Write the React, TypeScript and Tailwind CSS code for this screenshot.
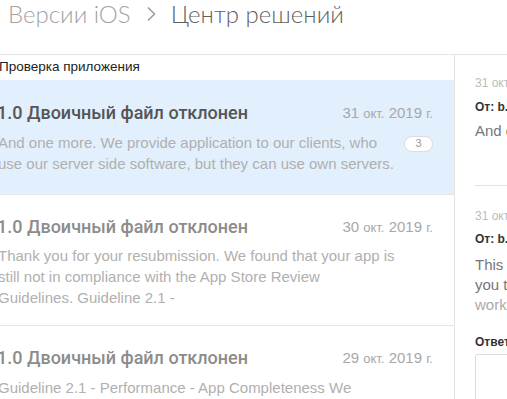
const threads = [
  {
    id: 1,
    title: '1.0 Двоичный файл отклонен',
    day: '31',
    month: 'окт.',
    year: '2019',
    body: 'And one more. We provide application to our clients, who use our server side software, but they can use own servers.',
    count: 3,
    active: true,
  },
  {
    id: 2,
    title: '1.0 Двоичный файл отклонен',
    day: '30',
    month: 'окт.',
    year: '2019',
    body: 'Thank you for your resubmission. We found that your app is still not in compliance with the App Store Review Guidelines. Guideline 2.1 -',
    active: false,
  },
  {
    id: 3,
    title: '1.0 Двоичный файл отклонен',
    day: '29',
    month: 'окт.',
    year: '2019',
    body: 'Guideline 2.1 - Performance - App Completeness We discovered one or more bugs in your app when reviewed on iPad.',
    active: false,
  },
];

function DateLabel({ day, month, year }: { day: string; month: string; year: string }) {
  return (
    <span className="whitespace-nowrap text-[15px] font-light text-[#a8a8a8]">
      {day} <span className="text-[13px]">{month}</span> {year} <span className="text-[13px]">г.</span>
    </span>
  );
}

export default function App() {
  return (
    <div className="h-[399px] w-[507px] overflow-hidden bg-white font-['Liberation_Sans',Arial,sans-serif]">
      <div className="-ml-[20px] w-[527px]">
        {/* breadcrumb */}
        <div className="flex h-[55px] items-start gap-[14px] border-b border-[#e4e4e4] pl-[28px] font-['Lato',sans-serif] text-[24px] font-light leading-[28px]">
          <span className="text-[#a3a3a3]">Версии iOS</span>
          <svg width="10" height="16" viewBox="0 0 10 16" className="mx-[1px] mt-[6px]" fill="none">
            <polyline points="2,1.5 8.5,8 2,14.5" stroke="#9c9c9c" strokeWidth="1.5" />
          </svg>
          <span className="text-[#5f5f5f]">Центр решений</span>
        </div>

        <div className="flex">
          {/* thread list */}
          <div className="w-[475px] shrink-0 border-r border-[#e4e4e4]">
            <div className="flex h-[25px] items-center pl-[19px] text-[13.5px] text-[#222]">
              Проверка приложения
            </div>
            {threads.map((t) => (
              <div
                key={t.id}
                className={
                  t.active
                    ? 'border-b border-[#e6e6e6] bg-[#e2effc] pb-[20px] pl-[17px] pr-[21px] pt-[22px]'
                    : 'border-b border-[#e6e6e6] bg-white pb-[17px] pl-[17px] pr-[21px] pt-[21px]'
                }
              >
                <div className="flex items-center justify-between">
                  <span
                    className={
                      t.active
                        ? "font-['Roboto',sans-serif] text-[18px] font-medium leading-[22px] text-[#555]"
                        : "font-['Roboto',sans-serif] text-[18px] font-medium leading-[22px] text-[#8c8c8c]"
                    }
                  >
                    {t.title}
                  </span>
                  <DateLabel day={t.day} month={t.month} year={t.year} />
                </div>
                <div className="mt-[7px] flex items-start justify-between">
                  <p className="ml-[1px] w-[401px] text-[15px] leading-[21px] text-[#b0b0b0]">{t.body}</p>
                  {t.count && (
                    <span className="mt-[4px] flex h-[16px] w-[29px] items-center justify-center rounded-full border border-[#dcdcdc] bg-white text-[11px] text-[#999]">
                      {t.count}
                    </span>
                  )}
                </div>
              </div>
            ))}
          </div>

          {/* conversation */}
          <div className="min-w-0 flex-1 overflow-hidden pl-[20px]">
            <div className="border-b border-[#e4e4e4] pb-[18px] pt-[19px]">
              <div className="whitespace-nowrap text-[12px] text-[#bbb]">31 окт. 2019 г., 11:42</div>
              <div className="mt-[6px] whitespace-nowrap text-[12px] font-bold text-[#333]">От: b.sokolov@example.com</div>
              <div className="mt-[5px] whitespace-nowrap text-[15px] leading-[20px] text-[#777]">And one more. We provide application</div>
              <div className="h-[26px]" />
            </div>
            <div className="pt-[21px]">
              <div className="whitespace-nowrap text-[12px] text-[#bbb]">31 окт. 2019 г., 10:05</div>
              <div className="mt-[5px] whitespace-nowrap text-[12px] font-bold text-[#333]">От: b.sokolov@example.com</div>
              <div className="mt-[7px] text-[15px] leading-[20px] text-[#777]">
                <div className="whitespace-nowrap">This is about our product</div>
                <div className="whitespace-nowrap">you told us about</div>
                <div className="whitespace-nowrap text-[#aaa]">works on our servers</div>
              </div>
            </div>
            <div className="mt-[18px] whitespace-nowrap text-[12px] font-bold text-[#333]">Ответ</div>
            <div className="mt-[3px] h-[60px] w-[200px] rounded-[3px] border border-[#dcdcdc]" />
          </div>
        </div>
      </div>
    </div>
  );
}
